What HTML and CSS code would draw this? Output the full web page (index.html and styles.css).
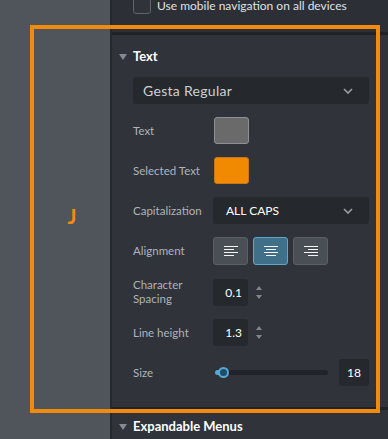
FILE: index.html
```html
<!DOCTYPE html>
<html>
  <head>
    <meta name="viewport" content="width=device-width, initial-scale=1.0" />
    <link rel="stylesheet" href="styles.css">
  </head>
  <body>
    <aside class="rail"></aside>
    <main class="panel">
      <section class="block block-top">
        <label class="check-row">
          <span class="checkbox"></span>
          <span>Use mobile navigation on all devices</span>
        </label>
      </section>

      <section class="block block-text">
        <h2 class="block-title"><span class="caret"></span>Text</h2>
        <div class="fields">
          <div class="select select-wide">
            <span>Gesta Regular</span>
            <svg class="chev" width="10" height="6" viewBox="0 0 10 6"><path d="M1 1l4 4 4-4" fill="none" stroke="#9ba0a7" stroke-width="1.6"/></svg>
          </div>

          <div class="row">
            <span class="label">Text</span>
            <span class="swatch swatch-gray"></span>
          </div>
          <div class="row">
            <span class="label">Selected Text</span>
            <span class="swatch swatch-orange"></span>
          </div>
          <div class="row">
            <span class="label">Capitalization</span>
            <div class="select select-caps">
              <span>ALL CAPS</span>
              <svg class="chev" width="10" height="6" viewBox="0 0 10 6"><path d="M1 1l4 4 4-4" fill="none" stroke="#9ba0a7" stroke-width="1.6"/></svg>
            </div>
          </div>
          <div class="row">
            <span class="label">Alignment</span>
            <div class="align-group">
              <button class="align-btn">
                <svg width="16" height="12" viewBox="0 0 16 12"><path d="M1 1.5h14M1 4.5h10M1 7.5h14M1 10.5h10" stroke="#f2f4f6" stroke-width="1"/></svg>
              </button>
              <button class="align-btn is-on">
                <svg width="16" height="12" viewBox="0 0 16 12"><path d="M1 1.5h14M3 4.5h10M1 7.5h14M3 10.5h10" stroke="#f2f4f6" stroke-width="1"/></svg>
              </button>
              <button class="align-btn">
                <svg width="16" height="12" viewBox="0 0 16 12"><path d="M1 1.5h14M5 4.5h10M1 7.5h14M5 10.5h10" stroke="#f2f4f6" stroke-width="1"/></svg>
              </button>
            </div>
          </div>
          <div class="row">
            <span class="label">Character<br>Spacing</span>
            <div class="num-box">0.1</div>
            <span class="spinner"><i class="up"></i><i class="down"></i></span>
          </div>
          <div class="row">
            <span class="label">Line height</span>
            <div class="num-box">1.3</div>
            <span class="spinner"><i class="up"></i><i class="down"></i></span>
          </div>
          <div class="row">
            <span class="label">Size</span>
            <div class="slider">
              <span class="slider-fill"></span>
              <span class="slider-knob"></span>
            </div>
            <div class="num-box num-size">18</div>
          </div>
        </div>
      </section>

      <section class="block block-menus">
        <h2 class="block-title"><span class="caret"></span>Expandable Menus</h2>
      </section>
    </main>

    <div class="highlight"><span class="mark">J</span></div>
  </body>
</html>
```

FILE: styles.css
```css
html, body {
  height: 100%;
  margin: 0;
  padding: 0;
}
body {
  display: flex;
  overflow: hidden;
  font-family: Lato, "Open Sans", sans-serif;
  background-color: #50545b;
  color: #e4e6e9;
}
.rail {
  width: 110px;
  flex: none;
}
.panel {
  flex: 1;
  border-left: 2px solid #24272c;
  background-color: #30333a;
  display: flex;
  flex-flow: column;
}

.block {
  border-bottom: 3px solid #1f2227;
}
.block-top {
  height: 32px;
  background-color: #2c2f36;
  padding-left: 21px;
}
.check-row {
  display: flex;
  align-items: center;
  gap: 6px;
  margin-top: -2px;
  font-size: 12px;
  line-height: 12px;
  color: #dfe2e5;
}
.checkbox {
  width: 16px;
  height: 16px;
  margin-top: -2px;
  border: 1px solid #5f636a;
  border-radius: 3px;
  background-color: #30333a;
}

.block-text {
  padding: 13px 19px 21px 7px;
}
.block-title {
  margin: 0;
  height: 16px;
  display: flex;
  align-items: center;
  gap: 6px;
  font-size: 13px;
  font-weight: 700;
  color: #ffffff;
}
.caret {
  width: 0;
  height: 0;
  border-left: 4px solid transparent;
  border-right: 4px solid transparent;
  border-top: 6px solid #858a92;
  margin-top: 1px;
}

.fields {
  margin-top: 13px;
  padding-left: 14px;
  display: flex;
  flex-flow: column;
  gap: 13px;
}
.select {
  height: 27px;
  background-color: #25282d;
  border-radius: 3px;
  display: flex;
  align-items: center;
  justify-content: space-between;
  padding: 0 16px 0 10px;
  box-sizing: border-box;
}
.select-wide {
  font-size: 14px;
  color: #cdd1d5;
  letter-spacing: 0.3px;
}
.select-caps {
  flex: 1;
  font-size: 12px;
  color: #ffffff;
  padding-left: 13px;
}

.row {
  display: flex;
  align-items: center;
  min-height: 26px;
}
.label {
  width: 80px;
  flex: none;
  font-size: 11.5px;
  line-height: 14px;
  color: #aeb3ba;
}
.swatch {
  width: 33px;
  height: 25px;
  border-radius: 3px;
  margin-left: 1px;
}
.swatch-gray {
  background-color: #6a6a6a;
  border: 1px solid #8d9096;
}
.swatch-orange {
  background-color: #f18a00;
  border: 1px solid #c9761a;
}

.align-group {
  display: flex;
  gap: 5px;
}
.align-btn {
  width: 35px;
  height: 28px;
  padding: 0;
  border: 1px solid #5b5f66;
  border-radius: 3px;
  background-color: #4a4e55;
  display: flex;
  align-items: center;
  justify-content: center;
}
.align-btn.is-on {
  background-color: #3f6f89;
  border-color: #5ea6cf;
}

.num-box {
  width: 35px;
  height: 27px;
  box-sizing: border-box;
  background-color: #25282d;
  border-radius: 3px;
  font-size: 12px;
  color: #ffffff;
  display: flex;
  align-items: center;
  justify-content: flex-end;
  padding-right: 6px;
}
.spinner {
  display: flex;
  flex-flow: column;
  gap: 5px;
  margin-left: 8px;
}
.spinner i {
  width: 0;
  height: 0;
  border-left: 3px solid transparent;
  border-right: 3px solid transparent;
}
.spinner .up {
  border-bottom: 4px solid #80858c;
}
.spinner .down {
  border-top: 4px solid #80858c;
}

.slider {
  position: relative;
  width: 113px;
  height: 5px;
  margin-left: 2px;
  border-radius: 3px;
  background-color: #202328;
}
.slider-fill {
  position: absolute;
  left: 0;
  top: 0;
  width: 8px;
  height: 5px;
  border-radius: 3px;
  background-color: #5aa8d6;
}
.slider-knob {
  position: absolute;
  left: 3px;
  top: -3px;
  width: 7px;
  height: 7px;
  border-radius: 50%;
  border: 2px solid #5aa8d6;
  background-color: #1f4d66;
}
.num-size {
  width: 30px;
  margin-left: auto;
  justify-content: center;
  padding-right: 0;
}

.block-menus {
  border-bottom: none;
  padding: 8px 19px 0 7px;
  flex: 1;
}

.highlight {
  position: absolute;
  left: 30px;
  top: 25px;
  width: 342px;
  height: 380px;
  border: 4px solid #f28b0c;
  display: flex;
  align-items: center;
}
.mark {
  width: 76px;
  margin-bottom: 8px;
  text-align: center;
  font-size: 21px;
  font-weight: 700;
  color: #f28b0c;
}
```
